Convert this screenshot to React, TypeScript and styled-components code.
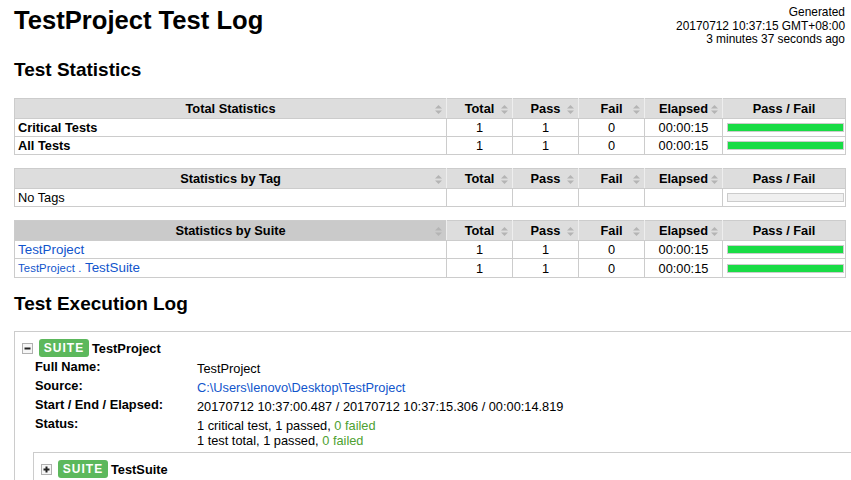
import React from 'react';
import styled, { createGlobalStyle } from 'styled-components';

const GlobalStyle = createGlobalStyle`
  html, body { margin: 0; padding: 0; overflow: hidden; background: #fff; }
  body {
    font-family: "Liberation Sans", Arial, Helvetica, sans-serif;
    font-size: 12.8px;
    color: #000;
  }
`;

const Page = styled.div`
  padding: 0 6px 0 14px;
`;

const Header = styled.header`
  display: flex;
  justify-content: space-between;
  align-items: flex-start;
  padding-top: 6px;
`;

const Title = styled.h1`
  margin: 0;
  font-size: 25.6px;
  line-height: 29px;
  font-weight: bold;
`;

const Generated = styled.div`
  text-align: right;
  font-size: 11.9px;
  line-height: 13.6px;
  white-space: nowrap;
`;

const SectionTitle = styled.h2<{ $mt: number; $mb: number }>`
  margin: ${(p) => p.$mt}px 0 ${(p) => p.$mb}px;
  font-size: 19px;
  line-height: 22px;
  font-weight: bold;
`;

const StatTable = styled.table`
  border-collapse: collapse;
  table-layout: fixed;
  width: 100%;
  border: 1px solid #ccc;
  margin-bottom: 13px;
  &:last-of-type { margin-bottom: 0; }
`;

const HeadCell = styled.th<{ $sorted?: boolean }>`
  position: relative;
  background: ${(p) => (p.$sorted ? '#cacaca' : '#dddddd')};
  border: 1px solid #ccc;
  border-left-color: #eee;
  border-right-color: #eee;
  &:first-child { border-left-color: #ccc; }
  &:last-child { border-right-color: #ccc; }
  padding: 0 3px;
  line-height: 19px;
  font-weight: bold;
  text-align: center;
  white-space: nowrap;
`;

const SortIcon = styled.svg`
  position: absolute;
  right: 4px;
  top: 50%;
  margin-top: -4px;
  width: 7px;
  height: 9px;
`;

const Cell = styled.td<{ $name?: boolean; $bold?: boolean }>`
  border: 1px solid #ccc;
  padding: 0 3px;
  line-height: 17px;
  text-align: ${(p) => (p.$name ? 'left' : 'center')};
  font-weight: ${(p) => (p.$bold ? 'bold' : 'normal')};
  white-space: nowrap;
  overflow: hidden;
`;

const BarCell = styled.td`
  border: 1px solid #ccc;
  padding: 0 1px 0 4px;
  vertical-align: middle;
`;

const Bar = styled.div<{ $empty?: boolean }>`
  height: 7px;
  border: 1px solid #ccc;
  background: ${(p) => (p.$empty ? '#f0f0f0' : '#19dc45')};
`;

const Link = styled.a`
  color: #1155cc;
  text-decoration: none;
`;

const StatLink = styled(Link)`
  font-size: 13.4px;
`;

const ParentName = styled.span`
  font-size: 11.3px;
  letter-spacing: 0.1px;
`;

const ExecLog = styled.div`
  margin-right: -300px;
`;

const SuiteBox = styled.div<{ $nested?: boolean }>`
  border: 1px solid #ccc;
  padding: 7px 0 0 0;
  margin: ${(p) => (p.$nested ? '2px 0 0 18px' : '0')};
  min-height: 200px;
`;

const SuiteHeader = styled.div`
  display: flex;
  align-items: center;
  height: 18px;
  padding-left: 7px;
`;

const Toggle = styled.span`
  display: flex;
  align-items: center;
  justify-content: center;
  width: 9px;
  height: 9px;
  border: 1px solid #b0b0b0;
  background: #f6f6f6;
`;

const Badge = styled.span`
  display: inline-flex;
  align-items: center;
  justify-content: center;
  margin-left: 6px;
  width: 50px;
  height: 18px;
  border-radius: 3px;
  background: #5cb85c;
  color: #fff;
  font-weight: bold;
  font-size: 12px;
  letter-spacing: 1px;
`;

const SuiteName = styled.span`
  margin-left: 3px;
  font-weight: bold;
`;

const MetaTable = styled.table`
  border-collapse: collapse;
  margin: 2px 0 0 20px;
`;

const MetaLabel = styled.th`
  text-align: left;
  vertical-align: top;
  font-weight: bold;
  width: 162px;
  padding: 0;
  line-height: 15px;
`;

const MetaValue = styled.td`
  padding: 2px 0;
  line-height: 15px;
  vertical-align: top;
`;

const PassText = styled.span`
  color: #4ea132;
`;

const Sort = () => (
  <SortIcon viewBox="0 0 7 9">
    <path d="M3.5 0 L7 3.6 H0 Z M0 5.4 H7 L3.5 9 Z" fill="#b4b4b4" />
  </SortIcon>
);

type Row = { name: React.ReactNode; bold?: boolean; stats?: [string, string, string, string] };

const cols = [432, 66, 66, 66, 78, 123];

const StatsBlock = ({ title, rows, sorted }: { title: string; rows: Row[]; sorted?: boolean }) => (
  <StatTable>
    <colgroup>
      {cols.map((w, i) => (
        <col key={i} style={{ width: w }} />
      ))}
    </colgroup>
    <thead>
      <tr>
        <HeadCell $sorted={sorted}>
          {title}
          <Sort />
        </HeadCell>
        <HeadCell>
          Total
          <Sort />
        </HeadCell>
        <HeadCell>
          Pass
          <Sort />
        </HeadCell>
        <HeadCell>
          Fail
          <Sort />
        </HeadCell>
        <HeadCell>
          Elapsed
          <Sort />
        </HeadCell>
        <HeadCell>Pass / Fail</HeadCell>
      </tr>
    </thead>
    <tbody>
      {rows.map((r, i) => (
        <tr key={i}>
          <Cell $name $bold={r.bold}>
            {r.name}
          </Cell>
          <Cell>{r.stats ? r.stats[0] : ''}</Cell>
          <Cell>{r.stats ? r.stats[1] : ''}</Cell>
          <Cell>{r.stats ? r.stats[2] : ''}</Cell>
          <Cell>{r.stats ? r.stats[3] : ''}</Cell>
          <BarCell>
            <Bar $empty={!r.stats} />
          </BarCell>
        </tr>
      ))}
    </tbody>
  </StatTable>
);

const ToggleIcon = ({ plus }: { plus?: boolean }) => (
  <Toggle>
    <svg width="7" height="7" viewBox="0 0 7 7">
      <rect x="0.5" y="2.5" width="6" height="2" fill="#222" />
      {plus && <rect x="2.5" y="0.5" width="2" height="6" fill="#222" />}
    </svg>
  </Toggle>
);

const stats: [string, string, string, string] = ['1', '1', '0', '00:00:15'];

export default function App() {
  return (
    <>
      <GlobalStyle />
      <Page>
        <Header>
          <Title>TestProject Test Log</Title>
          <Generated>
            Generated
            <br />
            20170712 10:37:15 GMT+08:00
            <br />
            3 minutes 37 seconds ago
          </Generated>
        </Header>

        <SectionTitle $mt={12} $mb={17.6}>Test Statistics</SectionTitle>

        <StatsBlock
          title="Total Statistics"
          rows={[
            { name: 'Critical Tests', bold: true, stats },
            { name: 'All Tests', bold: true, stats },
          ]}
        />
        <StatsBlock title="Statistics by Tag" rows={[{ name: 'No Tags' }]} />
        <StatsBlock
          title="Statistics by Suite"
          sorted
          rows={[
            { name: <StatLink href="#s1">TestProject</StatLink>, stats },
            {
              name: (
                <StatLink href="#s1-s1">
                  <ParentName>TestProject .</ParentName> TestSuite
                </StatLink>
              ),
              stats,
            },
          ]}
        />

        <SectionTitle $mt={14.4} $mb={16.6}>Test Execution Log</SectionTitle>

        <ExecLog>
          <SuiteBox>
            <SuiteHeader>
              <ToggleIcon />
              <Badge>SUITE</Badge>
              <SuiteName>TestProject</SuiteName>
            </SuiteHeader>
            <MetaTable>
              <tbody>
                <tr>
                  <MetaLabel>Full Name:</MetaLabel>
                  <MetaValue>TestProject</MetaValue>
                </tr>
                <tr>
                  <MetaLabel>Source:</MetaLabel>
                  <MetaValue>
                    <Link href="#src">C:\Users\lenovo\Desktop\TestProject</Link>
                  </MetaValue>
                </tr>
                <tr>
                  <MetaLabel>Start / End / Elapsed:</MetaLabel>
                  <MetaValue>20170712 10:37:00.487 / 20170712 10:37:15.306 / 00:00:14.819</MetaValue>
                </tr>
                <tr>
                  <MetaLabel>Status:</MetaLabel>
                  <MetaValue>
                    1 critical test, 1 passed, <PassText>0 failed</PassText>
                    <br />
                    1 test total, 1 passed, <PassText>0 failed</PassText>
                  </MetaValue>
                </tr>
              </tbody>
            </MetaTable>
            <SuiteBox $nested>
              <SuiteHeader>
                <ToggleIcon plus />
                <Badge>SUITE</Badge>
                <SuiteName>TestSuite</SuiteName>
              </SuiteHeader>
            </SuiteBox>
          </SuiteBox>
        </ExecLog>
      </Page>
    </>
  );
}
